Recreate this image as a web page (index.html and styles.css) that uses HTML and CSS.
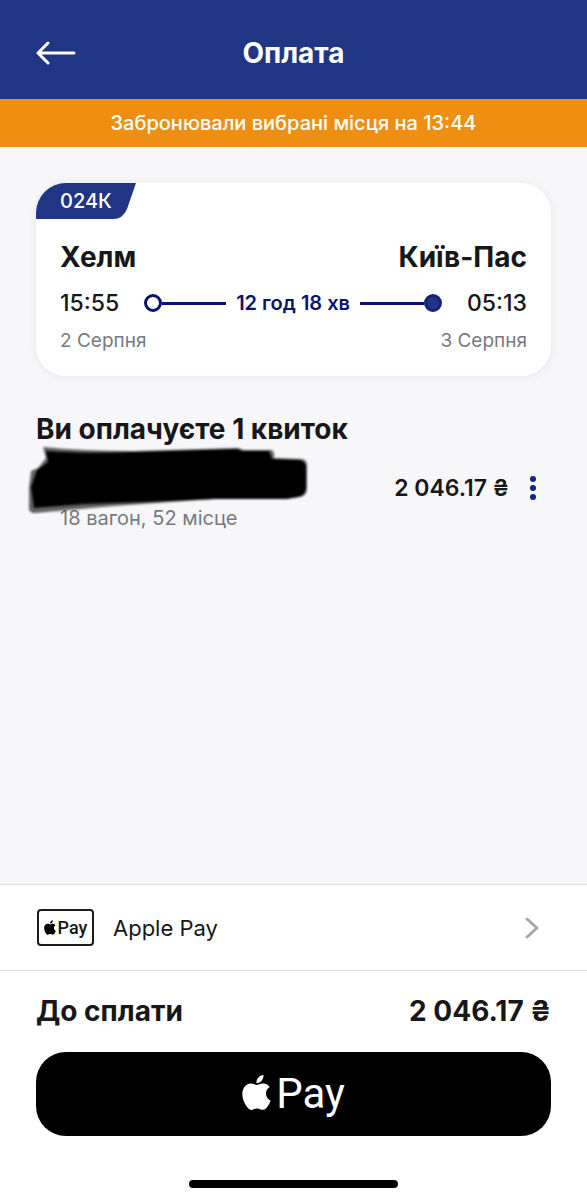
FILE: index.html
```html
<!DOCTYPE html>
<html lang="uk">
<head>
<meta charset="utf-8">
<meta name="viewport" content="width=device-width, initial-scale=1">
<title>Оплата</title>
<link rel="stylesheet" href="styles.css">
</head>
<body>
<svg class="defs" aria-hidden="true">
  <symbol id="apple" viewBox="2 0 20 24">
    <path d="M12.152 6.896c-.948 0-2.415-1.078-3.96-1.04-2.04.027-3.91 1.183-4.961 3.014-2.117 3.675-.546 9.103 1.519 12.09 1.013 1.454 2.208 3.09 3.792 3.039 1.52-.065 2.09-.987 3.935-.987 1.831 0 2.35.987 3.96.948 1.637-.026 2.676-1.48 3.676-2.948 1.156-1.688 1.636-3.325 1.662-3.415-.039-.013-3.182-1.221-3.22-4.857-.026-3.04 2.48-4.494 2.597-4.559-1.429-2.09-3.623-2.324-4.39-2.376-2-.156-3.675 1.09-4.61 1.09zM15.53 3.83c.843-1.012 1.4-2.427 1.245-3.83-1.207.052-2.662.805-3.532 1.818-.78.896-1.454 2.338-1.273 3.714 1.338.104 2.715-.688 3.559-1.701"/>
  </symbol>
</svg>
<header class="header">
  <button class="back" type="button" aria-label="Назад">
    <svg width="40" height="26" viewBox="0 0 40 26"><path d="M38 13H2M12 3L2 13l10 10"/></svg>
  </button>
  <h1 class="title">Оплата</h1>
</header>
<p class="notice">Забронювали вибрані місця на 13:44</p>
<main class="content">
  <section class="trip">
    <div class="train">
      <svg class="train-shape" width="100" height="36" viewBox="0 0 100 36"><path d="M0 0H100L91 26Q87 36 77 36H0Z"/></svg>
      <span class="train-number">024К</span>
    </div>
    <div class="trip-body">
      <div class="row stations"><h2>Хелм</h2><h2>Київ-Пас</h2></div>
      <div class="row times">
        <time>15:55</time>
        <div class="route">
          <span class="dot"></span><span class="line"></span>
          <span class="duration">12 год 18 хв</span>
          <span class="line"></span><span class="dot dot-end"></span>
        </div>
        <time>05:13</time>
      </div>
      <div class="row dates"><span>2 Серпня</span><span>3 Серпня</span></div>
    </div>
  </section>
  <h2 class="section-title">Ви оплачуєте 1 квиток</h2>
  <section class="ticket">
    <p class="seat">18 вагон, 52 місце</p>
    <svg class="scribble" width="290" height="76" viewBox="0 0 290 76" aria-hidden="true">
      <path class="scribble-soft" d="M19 1Q60 5 110 5L214 2L220 4H248Q251 7 250 12L278 13Q284 14 283 22V42Q283 50 276 51L262 53H190L90 60L12 67Q4 68 5 60V42L7 25L14 22L22 12Z"/>
      <path d="M22 5Q60 8 110 6L213 3L218 5H245L248 13L275 14Q282 15 282 22V42Q281 50 274 51L262 53H190L120 56L60 58L10 62L7 41L13 24L24 16Z"/>
    </svg>
    <span class="price">2 046.17 ₴</span>
    <button class="more" type="button" aria-label="Дії з квитком">
      <svg width="8" height="24" viewBox="0 0 8 24"><circle cx="4" cy="3" r="3"/><circle cx="4" cy="12" r="3"/><circle cx="4" cy="21" r="3"/></svg>
    </button>
  </section>
</main>
<footer class="footer">
  <button class="method" type="button">
    <span class="method-badge"><svg width="12" height="15"><use href="#apple"/></svg><span>Pay</span></span>
    <span class="method-name">Apple Pay</span>
    <svg class="chevron" width="14" height="22" viewBox="0 0 14 22"><path d="M2 2l10 9L2 20"/></svg>
  </button>
  <div class="checkout">
    <div class="row total"><span>До сплати</span><span>2 046.17 ₴</span></div>
    <button class="pay" type="button"><svg width="29" height="35"><use href="#apple"/></svg><span>Pay</span></button>
    <div class="home"></div>
  </div>
</footer>
</body>
</html>
```
FILE: styles.css
```css
* { box-sizing: border-box; margin: 0; }
body {
  display: flex;
  flex-direction: column;
  min-height: 100vh;
  background: #f7f7fa;
  color: #171717;
  font-family: Inter, "Noto Sans", sans-serif;
}
button { border: 0; padding: 0; background: none; color: inherit; font: inherit; cursor: pointer; }
svg { display: block; flex: none; }
.defs { position: absolute; width: 0; height: 0; }
.row { display: flex; justify-content: space-between; align-items: center; }

.header {
  display: grid;
  grid-template-columns: 40px 1fr 40px;
  align-items: center;
  padding: 36px 36px 29px;
  background: #203583;
  color: #fff;
}
.back path { fill: none; stroke: #fff; stroke-width: 3; stroke-linecap: round; stroke-linejoin: round; }
.title { font-size: 28px; line-height: 34px; font-weight: 700; text-align: center; }
.notice {
  padding: 12px 36px;
  background: #ef8f11;
  color: #fff;
  font-size: 20px;
  line-height: 24px;
  font-weight: 500;
  text-align: center;
}

.content { flex: 1; padding: 36px; }
.trip {
  overflow: hidden;
  border-radius: 30px;
  background: #fff;
  box-shadow: 0 1px 10px rgba(30, 30, 60, 0.07);
}
.train { display: grid; align-items: center; justify-items: start; }
.train > * { grid-area: 1 / 1; }
.train-shape { fill: #203583; }
.train-number { padding-left: 24px; color: #fff; font-size: 20px; line-height: 24px; font-weight: 500; z-index: 1; }
.trip-body { padding: 20px 24px 23px; }
.stations h2 { font-size: 28px; line-height: 36px; font-weight: 700; }
.times { gap: 25px; margin-top: 14px; font-size: 23px; line-height: 28px; font-weight: 500; }
.route { display: flex; flex: 1; align-items: center; color: #06136f; }
.dot { width: 18px; height: 18px; border: 3px solid #06136f; border-radius: 50%; }
.dot-end { background: #203583; border-color: #142379; }
.line { flex: 1; height: 3px; background: #06136f; }
.duration { padding: 0 10px; font-size: 20px; font-weight: 600; white-space: nowrap; }
.dates { margin-top: 12px; color: #777a80; font-size: 19px; line-height: 24px; }

.section-title { margin-top: 36px; font-size: 28px; line-height: 34px; font-weight: 700; }
.ticket { position: relative; display: flex; align-items: center; gap: 20px; padding: 0 14px 0 24px; min-height: 84px; }
.seat { flex: 1; align-self: flex-end; color: #777a80; font-size: 20px; line-height: 24px; }
.scribble { position: absolute; left: -12px; top: 0; filter: blur(1px); }
.scribble-soft { opacity: 0.6; }
.price { font-size: 23px; line-height: 28px; font-weight: 600; }
.more svg { fill: #122581; }

.footer { background: #fff; border-top: 1px solid #dedee3; }
.method {
  display: flex;
  align-items: center;
  width: 100%;
  padding: 24px 48px 24px 37px;
  border-bottom: 1px solid #dedee3;
  text-align: left;
}
.method-badge {
  display: flex;
  align-items: center;
  justify-content: center;
  gap: 2px;
  width: 57px;
  height: 37px;
  border: 2px solid #1c1c1c;
  border-radius: 4px;
  font-family: Roboto, sans-serif;
  font-size: 18px;
  line-height: 24px;
  font-weight: 500;
}
.method-name { flex: 1; padding-left: 19px; font-size: 22px; line-height: 28px; }
.chevron path { fill: none; stroke: #a6a8ab; stroke-width: 3; stroke-linecap: round; stroke-linejoin: round; }
.checkout { padding: 23px 36px 12px; }
.total { font-size: 28px; line-height: 34px; font-weight: 700; }
.pay {
  display: flex;
  align-items: center;
  justify-content: center;
  gap: 5px;
  width: 100%;
  height: 84px;
  margin-top: 24px;
  border-radius: 30px;
  background: #000;
  color: #fff;
  fill: #fff;
  font-family: Roboto, sans-serif;
  font-size: 42px;
  line-height: 48px;
}
.pay svg { margin-bottom: 4px; }
.home { width: 209px; height: 8px; margin: 44px auto 0; border-radius: 4px; background: #000; }
```
